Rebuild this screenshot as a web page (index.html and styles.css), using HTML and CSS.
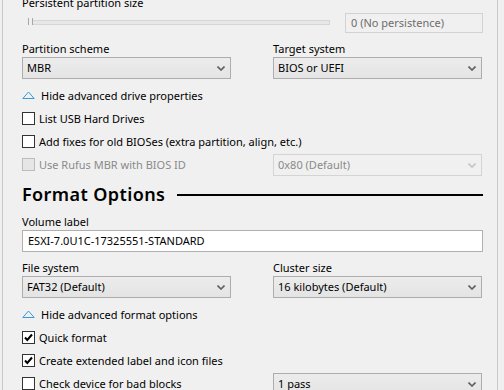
FILE: index.html
```html
<!DOCTYPE html>
<html>
<head>
    <title>Rufus - Drive Properties</title>
    <link rel="stylesheet" href="styles.css">
</head>
<body>
<div class="frame">
    <div class="field-label first">Persistent partition size</div>
    <div class="persist-row">
        <div class="slider">
            <span class="track"></span>
            <span class="thumb"></span>
        </div>
        <div class="readonly-box">0 (No persistence)</div>
    </div>

    <div class="pair">
        <div class="field">
            <div class="field-label">Partition scheme</div>
            <div class="combo">MBR<svg class="chev" width="8" height="5" viewBox="0 0 8 5"><path d="M0.5 0.5 L4 4 L7.5 0.5" fill="none" stroke="#5f5f5f" stroke-width="1.6"/></svg></div>
        </div>
        <div class="field">
            <div class="field-label">Target system</div>
            <div class="combo">BIOS or UEFI<svg class="chev" width="8" height="5" viewBox="0 0 8 5"><path d="M0.5 0.5 L4 4 L7.5 0.5" fill="none" stroke="#5f5f5f" stroke-width="1.6"/></svg></div>
        </div>
    </div>

    <div class="toggle">
        <svg class="tri" width="13" height="8" viewBox="0 0 13 8"><path d="M0.8 7.5 L6.5 1 L12.2 7.5 Z" fill="none" stroke="#3a9ad9" stroke-width="1"/></svg>
        Hide advanced drive properties
    </div>
    <div class="check-row"><span class="box"></span>List USB Hard Drives</div>
    <div class="check-row"><span class="box"></span>Add fixes for old BIOSes (extra partition, align, etc.)</div>
    <div class="pair pair-check">
        <div class="check-row disabled"><span class="box"></span>Use Rufus MBR with BIOS ID</div>
        <div class="combo disabled">0x80 (Default)<svg class="chev" width="8" height="5" viewBox="0 0 8 5"><path d="M0.5 0.5 L4 4 L7.5 0.5" fill="none" stroke="#c4c4c4" stroke-width="1.6"/></svg></div>
    </div>

    <div class="section-title">
        <span>Format Options</span>
        <span class="rule"></span>
    </div>

    <div class="field-label">Volume label</div>
    <div class="textbox">ESXI-7.0U1C-17325551-STANDARD</div>

    <div class="pair">
        <div class="field">
            <div class="field-label">File system</div>
            <div class="combo">FAT32 (Default)<svg class="chev" width="8" height="5" viewBox="0 0 8 5"><path d="M0.5 0.5 L4 4 L7.5 0.5" fill="none" stroke="#5f5f5f" stroke-width="1.6"/></svg></div>
        </div>
        <div class="field">
            <div class="field-label">Cluster size</div>
            <div class="combo">16 kilobytes (Default)<svg class="chev" width="8" height="5" viewBox="0 0 8 5"><path d="M0.5 0.5 L4 4 L7.5 0.5" fill="none" stroke="#5f5f5f" stroke-width="1.6"/></svg></div>
        </div>
    </div>

    <div class="toggle">
        <svg class="tri" width="13" height="8" viewBox="0 0 13 8"><path d="M0.8 7.5 L6.5 1 L12.2 7.5 Z" fill="none" stroke="#3a9ad9" stroke-width="1"/></svg>
        Hide advanced format options
    </div>
    <div class="check-row"><span class="box checked"><svg width="11" height="11" viewBox="0 0 11 11"><path d="M2 5.5 L4.3 8 L9 2.5" fill="none" stroke="#000" stroke-width="2"/></svg></span>Quick format</div>
    <div class="check-row"><span class="box checked"><svg width="11" height="11" viewBox="0 0 11 11"><path d="M2 5.5 L4.3 8 L9 2.5" fill="none" stroke="#000" stroke-width="2"/></svg></span>Create extended label and icon files</div>
    <div class="pair pair-check">
        <div class="check-row"><span class="box"></span>Check device for bad blocks</div>
        <div class="combo">1 pass<svg class="chev" width="8" height="5" viewBox="0 0 8 5"><path d="M0.5 0.5 L4 4 L7.5 0.5" fill="none" stroke="#5f5f5f" stroke-width="1.6"/></svg></div>
    </div>
</div>
</body>
</html>
```

FILE: styles.css
```css
html, body {
    margin: 0;
    padding: 0;
    background: #f0f0f0;
    overflow: hidden;
}
body {
    font-family: "Noto Sans", "Open Sans", sans-serif;
    font-size: 11px;
    color: #000;
}
.frame {
    margin: 0 6px 0 2px;
    height: 390px;
    border-left: 1px solid #c9c9c9;
    border-right: 1px solid #c9c9c9;
    padding: 0 14px 0 19px;
    overflow: hidden;
}
.field-label {
    line-height: 15px;
    height: 15px;
    margin-bottom: 1px;
}
.field-label.first {
    margin-top: -5px;
    margin-bottom: 3px;
}
.persist-row {
    display: flex;
    align-items: center;
    height: 20px;
    margin-bottom: 8px;
}
.slider {
    position: relative;
    width: 302px;
    height: 20px;
    margin-left: 6px;
}
.track {
    position: absolute;
    left: 1px;
    right: 0;
    top: 7px;
    height: 3px;
    background: #e7e7e7;
    border: 1px solid #d6d6d6;
}
.thumb {
    position: absolute;
    left: 0;
    top: 5px;
    width: 3px;
    height: 7px;
    border-left: 1px solid #a8a8a8;
    border-right: 1px solid #a8a8a8;
    background: #f0f0f0;
}
.readonly-box {
    margin-left: auto;
    width: 131px;
    height: 18px;
    line-height: 18px;
    border: 1px solid #d2d2d2;
    padding-left: 5px;
    color: #6d6d6d;
}
.pair {
    display: grid;
    grid-template-columns: 209px 209px;
    column-gap: 42px;
}
.combo {
    position: relative;
    height: 20px;
    line-height: 20px;
    border: 1px solid #adadad;
    background: linear-gradient(#ececec, #e4e4e4);
    padding-left: 4px;
}
.combo .chev {
    position: absolute;
    right: 5px;
    top: 8px;
}
.combo.disabled {
    border-color: #d4d4d4;
    background: #f0f0f0;
    color: #8a8a8a;
}
.toggle {
    display: flex;
    align-items: center;
    height: 16px;
    margin-top: 8px;
    margin-bottom: 4px;
}
.tri {
    margin-right: 6px;
    margin-bottom: 1px;
}
.check-row {
    display: flex;
    align-items: center;
    height: 23px;
}
.box {
    width: 11px;
    height: 11px;
    border: 1px solid #333;
    background: #fff;
    margin-right: 4px;
    display: flex;
    align-items: center;
    justify-content: center;
    flex: none;
}
.check-row.disabled {
    color: #8a8a8a;
}
.check-row.disabled .box {
    border-color: #bcbcbc;
    background: #e6e6e6;
}
.pair-check {
    align-items: center;
}
.section-title {
    display: flex;
    align-items: center;
    margin-top: 5px;
    height: 26px;
    font-size: 18px;
    font-weight: 600;
    letter-spacing: 0.4px;
}
.rule {
    flex: 1;
    height: 2px;
    background: #000;
    margin-left: 12px;
    margin-top: 2px;
}
.section-title + .field-label {
    margin-top: 7px;
}
.textbox {
    height: 20px;
    line-height: 20px;
    border: 1px solid #b0b0b0;
    background: #fff;
    padding-left: 5px;
    margin-bottom: 8px;
}
```
